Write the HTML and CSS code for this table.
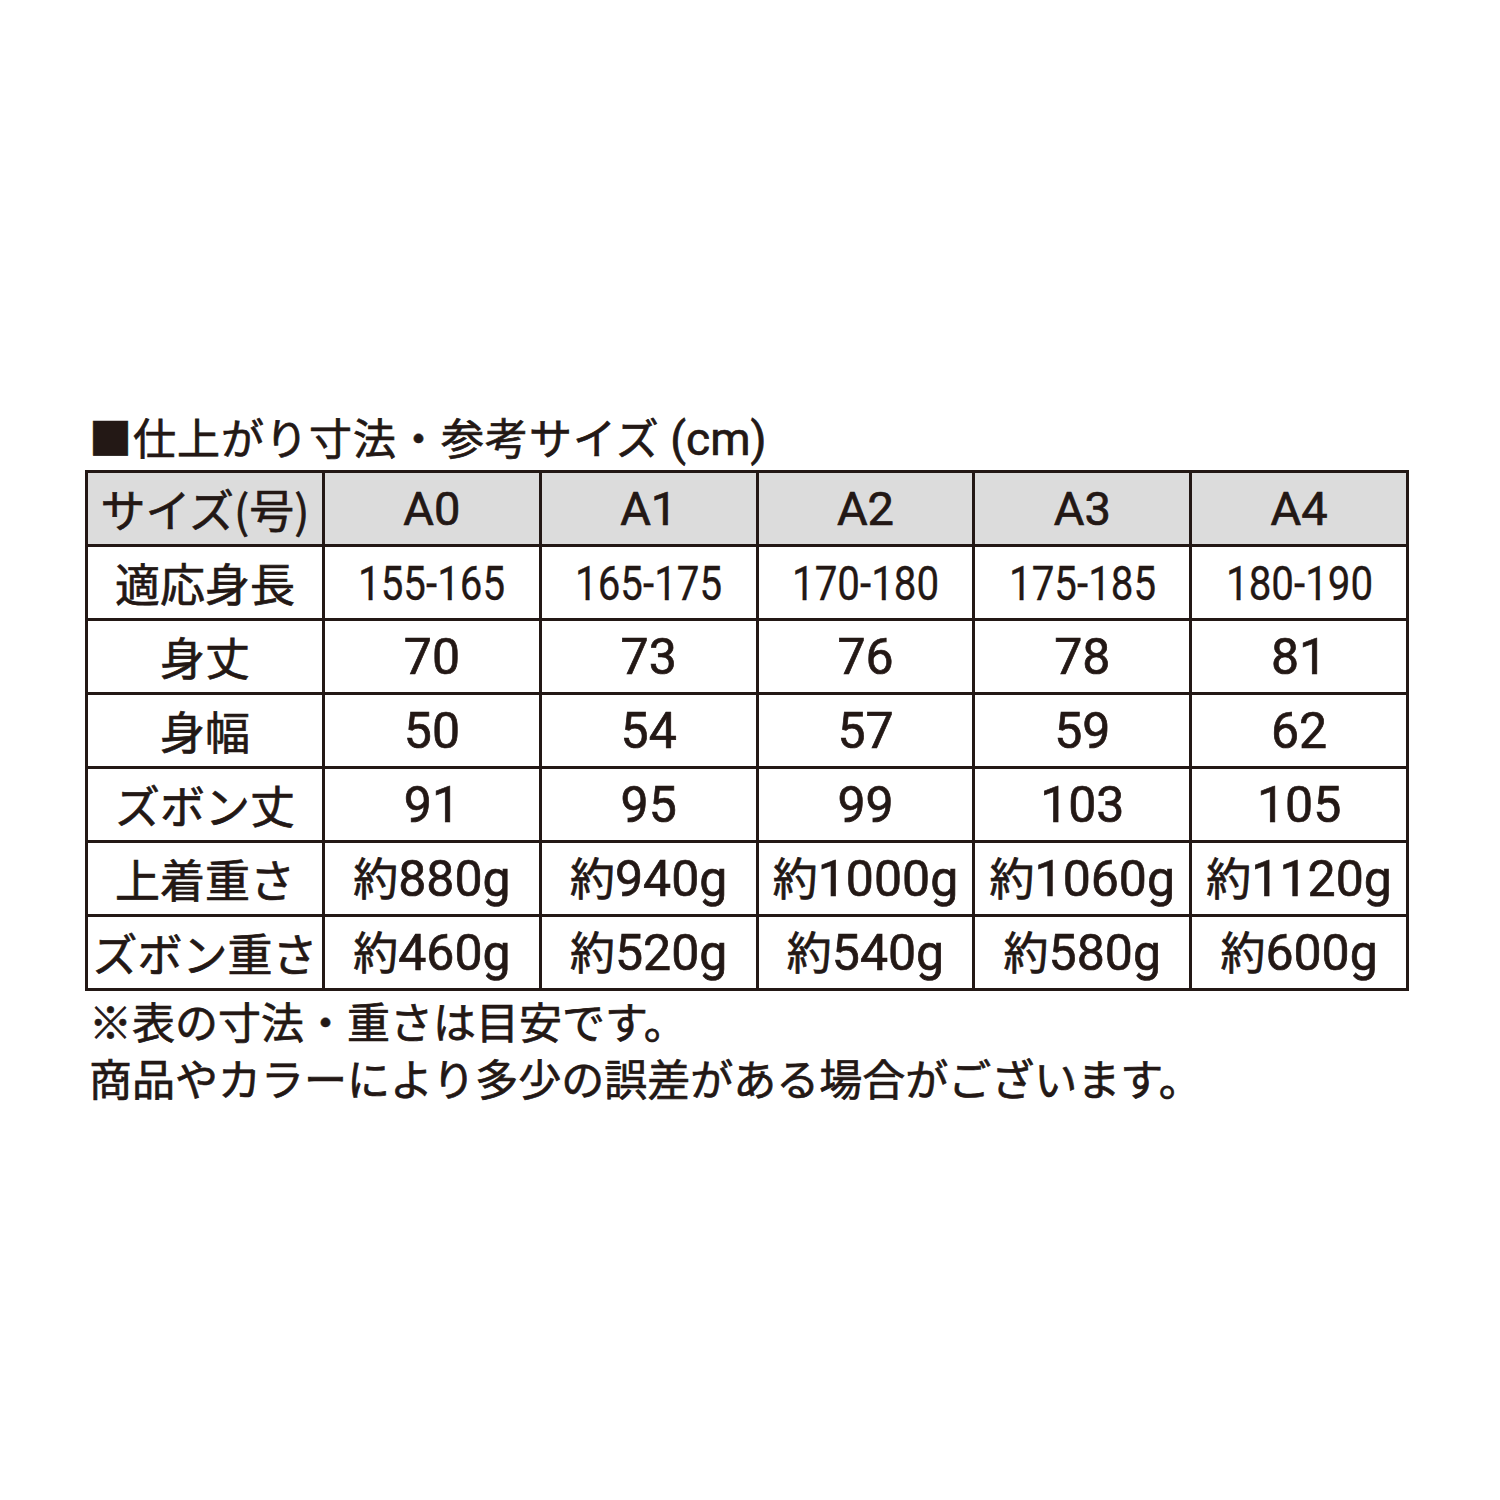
FILE: index.html
```html
<!DOCTYPE html>
<html lang="ja">
<head>
<meta charset="utf-8">
<link rel="stylesheet" href="styles.css">
</head>
<body>
<div class="page">
  <h1 class="title">■仕上がり寸法・参考サイズ <span class="lat">(cm)</span></h1>
  <table class="size">
    <colgroup>
      <col class="c-label"><col><col><col><col><col>
    </colgroup>
    <tr class="head">
      <th class="label">サイズ(号)</th>
      <th>A0</th><th>A1</th><th>A2</th><th>A3</th><th>A4</th>
    </tr>
    <tr>
      <th class="label">適応身長</th>
      <td><span class="cond">155-165</span></td>
      <td><span class="cond">165-175</span></td>
      <td><span class="cond">170-180</span></td>
      <td><span class="cond">175-185</span></td>
      <td><span class="cond">180-190</span></td>
    </tr>
    <tr>
      <th class="label">身丈</th>
      <td>70</td><td>73</td><td>76</td><td>78</td><td>81</td>
    </tr>
    <tr>
      <th class="label">身幅</th>
      <td>50</td><td>54</td><td>57</td><td>59</td><td>62</td>
    </tr>
    <tr>
      <th class="label">ズボン丈</th>
      <td>91</td><td>95</td><td>99</td><td>103</td><td>105</td>
    </tr>
    <tr>
      <th class="label">上着重さ</th>
      <td><span class="jp">約</span>880g</td>
      <td><span class="jp">約</span>940g</td>
      <td><span class="jp">約</span>1000g</td>
      <td><span class="jp">約</span>1060g</td>
      <td><span class="jp">約</span>1120g</td>
    </tr>
    <tr>
      <th class="label">ズボン重さ</th>
      <td><span class="jp">約</span>460g</td>
      <td><span class="jp">約</span>520g</td>
      <td><span class="jp">約</span>540g</td>
      <td><span class="jp">約</span>580g</td>
      <td><span class="jp">約</span>600g</td>
    </tr>
  </table>
  <p class="note">※表の寸法・重さは目安です。<br>商品やカラーにより多少の誤差がある場合がございます。</p>
</div>
</body>
</html>
```
FILE: styles.css
```css
html, body {
  margin: 0;
  padding: 0;
  background: #ffffff;
}
body {
  color: #231815;
  font-family: "Noto Sans CJK JP", sans-serif;
  font-weight: 400;
  -webkit-text-stroke: 0.7px #231815;
}
.page {
  padding: 408px 0 0 85px;
}
.title {
  margin: 0 0 3px 4px;
  font-size: 43px;
  font-weight: 400;
  line-height: 56px;
  letter-spacing: 1px;
}
.title .lat {
  font-family: "Roboto", sans-serif;
  font-size: 46px;
  letter-spacing: 0;
}
.size {
  border-collapse: collapse;
  table-layout: fixed;
  width: 1324px;
}
.c-label {
  width: 237px;
}
.size th, .size td {
  border: 3px solid #231815;
  height: 71px;
  padding: 0;
  text-align: center;
  vertical-align: middle;
  white-space: nowrap;
  font-weight: 400;
}
.size td, .size .head th {
  font-family: "Roboto", "Noto Sans CJK JP", sans-serif;
  font-size: 50px;
  line-height: 1;
}
.size .head th {
  background: #dcdcdc;
  font-size: 47px;
}
.size th.label {
  font-family: "Noto Sans CJK JP", sans-serif;
  font-size: 45px;
  line-height: 1;
}
.cond {
  display: inline-block;
  transform: scaleX(0.84);
  font-size: 48px;
  -webkit-text-stroke: 0.3px #231815;
}
.jp {
  font-family: "Noto Sans CJK JP", sans-serif;
  font-size: 45px;
}
.note {
  margin: 1px 0 0 4px;
  font-size: 43px;
  line-height: 57px;
}
```
